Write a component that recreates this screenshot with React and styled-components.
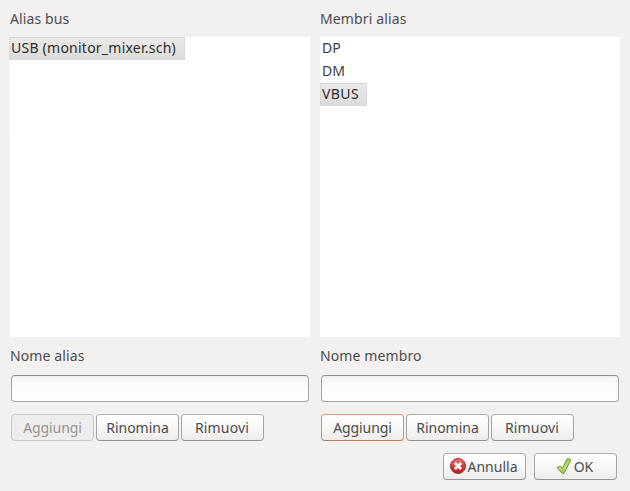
import React from "react";
import styled, { createGlobalStyle } from "styled-components";

const GlobalStyle = createGlobalStyle`
  * { box-sizing: border-box; }
  html, body { margin: 0; background: #f2f1f0; }
`;

const Dialog = styled.main`
  width: 630px;
  height: 491px;
  padding: 0 10px;
  background: #f2f1f0;
  color: #4c4c4c;
  font: 14px/20px "Noto Sans", "Open Sans", sans-serif;
  overflow: hidden;
`;

const Columns = styled.div`
  display: grid;
  grid-template-columns: 300px 300px;
  column-gap: 10px;
`;

const Column = styled.section`
  display: flex;
  flex-direction: column;
`;

const Label = styled.label`
  height: ${(p) => (p.$first ? 37 : 38)}px;
  padding-top: 9px;
  letter-spacing: ${(p) => p.$track || 0}px;
  white-space: nowrap;
`;

const List = styled.ul`
  height: 300px;
  margin: 0;
  padding: 0;
  list-style: none;
  background: #fff;
`;

const EditArea = styled.div`
  height: 96px;
  margin-left: -${(p) => p.$overhang}px;
  background: #fff;
`;

const Item = styled.li`
  width: ${(p) => (p.$width ? `${p.$width}px` : "fit-content")};
  height: 23px;
  padding-left: 1px;
  border: 1px dotted ${(p) => (p.$selected ? "#cfcecb" : "transparent")};
  background: ${(p) => (p.$selected ? "linear-gradient(#ebeae9, #dcdbda)" : "none")};
  color: ${(p) => (p.$selected ? "#2d2d2d" : "#3c3c3c")};
  line-height: 19px;
  letter-spacing: ${(p) => p.$track || 0}px;
  white-space: nowrap;
`;

const Field = styled.input`
  width: 298px;
  height: 27px;
  margin: 0 1px;
  padding: 0 6px;
  border: 1px solid #a5a4a2;
  border-top-color: #8f8e8d;
  border-radius: 4px;
  background: linear-gradient(#ededed, #f7f7f7 3px, #fff 20px);
  font: inherit;
  outline: none;
`;

const Actions = styled.div`
  display: flex;
  gap: 2px;
  margin: 12px 1px 0;
`;

const Footer = styled.footer`
  display: flex;
  justify-content: flex-end;
  gap: 8px;
  margin: 12px 3px 0 0;
`;

const tones = {
  normal: "#b0afad #a6a5a3 #969593",
  disabled: "#c8c7c5",
  focus: "#dc9c87 #d98a70 #cc7052",
};

const Button = styled.button`
  display: flex;
  align-items: center;
  justify-content: center;
  gap: 2px;
  width: 83px;
  height: 27px;
  padding: 0 ${(p) => p.$shift || 0}px 0 0;
  border: 1px solid;
  border-color: ${(p) => tones[p.$tone || "normal"]};
  border-radius: 4px;
  background: ${(p) => (p.disabled ? "#eeedec" : "linear-gradient(#fff, #f8f8f7 45%, #edecea)")};
  color: ${(p) => (p.disabled ? "#969492" : "#4c4c4c")};
  font: inherit;
  letter-spacing: ${(p) => p.$track || 0}px;
  white-space: nowrap;
`;

const Icon = styled.svg`
  flex: none;
  display: block;
  margin-top: ${(p) => p.$drop || 0}px;
`;

function CancelIcon() {
  return (
    <Icon width="16" height="16" viewBox="0 0 16 16" $drop={-2} aria-hidden="true">
      <defs>
        <linearGradient id="red" x1="0" y1="0" x2="0" y2="1">
          <stop offset="0" stopColor="#e77d7b" />
          <stop offset=".5" stopColor="#d33c3e" />
          <stop offset="1" stopColor="#b91c25" />
        </linearGradient>
      </defs>
      <circle cx="8" cy="8" r="7.5" fill="url(#red)" stroke="#a72c30" />
      <path d="M4.9 4.9l6.2 6.2M11.1 4.9l-6.2 6.2" stroke="#fff" strokeWidth="2.8" />
    </Icon>
  );
}

function CheckIcon() {
  return (
    <Icon width="16" height="18" viewBox="0 0 16 18" $drop={-2} aria-hidden="true">
      <defs>
        <linearGradient id="green" x1="0" y1="0" x2="0" y2="1">
          <stop offset="0" stopColor="#a4cf57" />
          <stop offset=".65" stopColor="#c2df72" />
          <stop offset="1" stopColor="#83b641" />
        </linearGradient>
      </defs>
      <path
        d="M1 10.8L4.2 9L6.2 11.6L11.2 1.8Q12 1.2 14.9 2.6L8 16.4L6.4 16.6Z"
        fill="url(#green)"
        stroke="#659a32"
        strokeLinejoin="round"
      />
    </Icon>
  );
}

const panels = [
  {
    title: "Alias bus",
    titleTrack: 0.12,
    field: "Nome alias",
    fieldTrack: 0.12,
    items: [{ name: "USB (monitor_mixer.sch)", selected: true, width: 176, track: 0.24 }],
    overhang: 1,
    addTone: "disabled",
  },
  {
    title: "Membri alias",
    titleTrack: 0.14,
    field: "Nome membro",
    fieldTrack: 0.12,
    items: [{ name: "DP" }, { name: "DM" }, { name: "VBUS", selected: true, width: 47, track: 0.4 }],
    overhang: 0,
    addTone: "focus",
  },
];

function Panel({ title, titleTrack, field, fieldTrack, items, overhang, addTone }) {
  return (
    <Column>
      <Label $first $track={titleTrack}>{title}</Label>
      <List>
        <EditArea $overhang={overhang}>
          {items.map((item) => (
            <Item key={item.name} $selected={item.selected} $width={item.width} $track={item.track}>
              {item.name}
            </Item>
          ))}
        </EditArea>
      </List>
      <Label $track={fieldTrack}>{field}</Label>
      <Field aria-label={field} />
      <Actions>
        <Button $tone={addTone} disabled={addTone === "disabled"} $track={-0.1}>Aggiungi</Button>
        <Button>Rinomina</Button>
        <Button $track={0.15} $shift={1}>Rimuovi</Button>
      </Actions>
    </Column>
  );
}

export default function App() {
  return (
    <Dialog>
      <GlobalStyle />
      <Columns>
        {panels.map((panel) => (
          <Panel key={panel.title} {...panel} />
        ))}
      </Columns>
      <Footer>
        <Button $shift={2}><CancelIcon />Annulla</Button>
        <Button $shift={2}><CheckIcon />OK</Button>
      </Footer>
    </Dialog>
  );
}
